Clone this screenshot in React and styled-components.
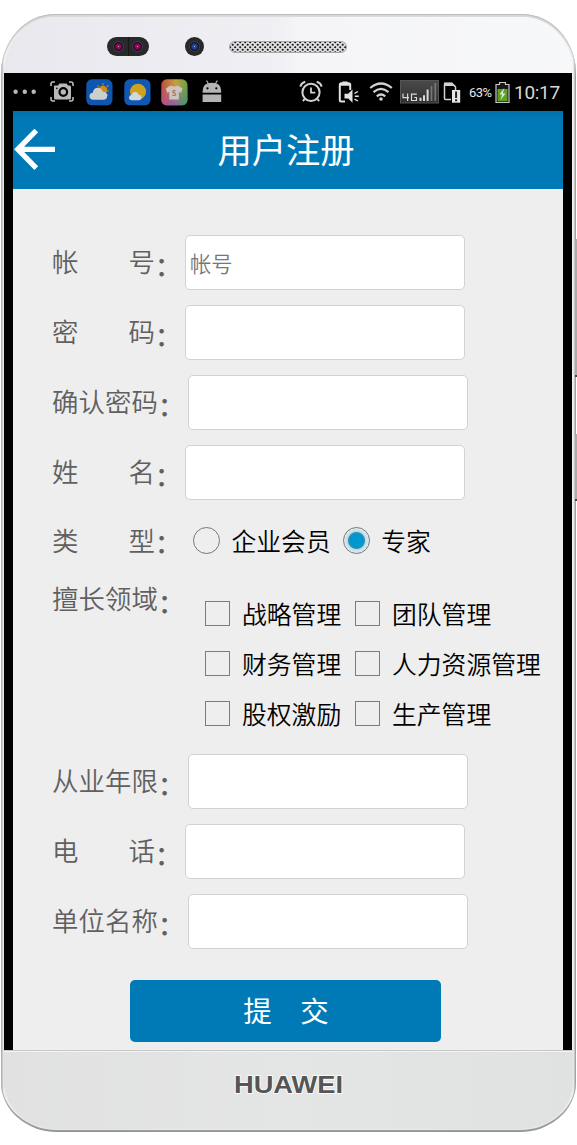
import React, { useState } from "react";
import styled, { createGlobalStyle } from "styled-components";

const DOMAINS = [
    ["战略管理", "团队管理"],
    ["财务管理", "人力资源管理"],
    ["股权激励", "生产管理"],
];

const StatusIcons = () => (
    <StatusBar>
        <Icon $gap={9} width="24" height="27">
            <g fill="#b9b9b9">
                <circle cx="2.6" cy="12.7" r="2.2" />
                <circle cx="11.8" cy="12.7" r="2.2" />
                <circle cx="20.7" cy="12.7" r="2.2" />
            </g>
        </Icon>
        <Icon $gap={13} width="24" height="27">
            <path d="M1 7V5q0-2 2-2h2M19 3h2q2 0 2 2v2M1 18v2q0 2 2 2h2M19 22h2q2 0 2-2v-2" fill="none" stroke="#b9b9b9" strokeWidth="1.6" />
            <path d="M4 7.500q0-1 1-1h3L9.500 4.500h7l1.500 2H19.500q1.500 0 1.500 1.500v11q0 1.500-1.500 1.500H5.500q-1.500 0-1.500-1.500z" fill="#b9b9b9" />
            <circle cx="13.300" cy="13" r="3.800" fill="#b9b9b9" stroke="#050505" strokeWidth="2.200" />
            <circle cx="6.800" cy="9.300" r="0.900" fill="#111" />
        </Icon>
        <Icon $gap={12} width="27" height="27">
            <rect x="0.300" y="0.300" width="26.200" height="26" rx="5.500" fill="#0f56b0" />
            <g stroke="#c18716" strokeWidth="1.100">
                <path d="M17 4v2.500M11.500 6.500l1.700 1.700M22.500 6.300l-1.700 1.700M22.800 12h-2M22 16.500l-1.500-1" />
            </g>
            <circle cx="17" cy="11" r="4.200" fill="#d08b18" />
            <path d="M7.500 20.700q-4-.2-4-3.500 0-3 3.300-3.400Q7.500 8.700 12 8.700q3.600 0 4.800 4 4.400.2 4.400 4 0 4-4 4z" fill="#ccd0cd" />
        </Icon>
        <Icon $gap={10.500} width="27" height="27">
            <rect x="0.300" y="0.300" width="26.200" height="26" rx="5.500" fill="#1058b3" />
            <circle cx="14" cy="12.700" r="8" fill="#cfa21d" />
            <path d="M8 21.300q-3-.2-3-2.600 0-2.300 2.500-2.600.8-3.200 3.700-3.200 2.900 0 3.500 2.900 2.800.2 2.800 2.800 0 2.700-2.900 2.700z" fill="#d3d8db" />
        </Icon>
        <Icon $gap={10.500} width="27" height="27">
            <defs>
                <linearGradient id="warm" x1="0" y1="0" x2="1" y2="0">
                    <stop offset="0" stopColor="#bd4e42" />
                    <stop offset="0.550" stopColor="#c4a03f" />
                    <stop offset="1" stopColor="#66a04d" />
                </linearGradient>
                <linearGradient id="cool" x1="0" y1="0" x2="1" y2="0">
                    <stop offset="0" stopColor="#c34e86" />
                    <stop offset="0.500" stopColor="#8660a8" />
                    <stop offset="1" stopColor="#3c9b6b" />
                </linearGradient>
                <linearGradient id="fade" x1="0" y1="0" x2="0" y2="1">
                    <stop offset="0.250" stopColor="#000" />
                    <stop offset="1" stopColor="#fff" />
                </linearGradient>
                <mask id="lower"><rect width="27" height="27" fill="url(#fade)" /></mask>
            </defs>
            <rect x="0.300" y="0.300" width="26.200" height="26" rx="5.500" fill="url(#warm)" />
            <rect x="0.300" y="0.300" width="26.200" height="26" rx="5.500" fill="url(#cool)" mask="url(#lower)" />
            <path d="M9.500 6.500q3.500 2.200 7.500 0l4.500 3-1.500 4.200-2.200-.8V20.500h-9.500v-7.600l-2.200.8L4.900 9.500z" fill="#cdc5c2" />
            <text x="13.200" y="16.500" fontSize="7.500" fontWeight="700" textAnchor="middle" fill="#b56b52">S</text>
        </Icon>
        <Icon $gap={13.500} width="20" height="27">
            <path d="M4.500 1.500l2 3.500M15.300 1.500l-2 3.500" stroke="#b4b4b4" strokeWidth="1.200" />
            <path d="M.6 13.800v-1.800q0-8.200 9.300-8.200t9.300 8.200v1.800z" fill="#b4b4b4" />
            <circle cx="5.500" cy="9.300" r="1.100" fill="#000" />
            <circle cx="14.300" cy="9.300" r="1.100" fill="#000" />
            <rect x="0.600" y="15.500" width="18.600" height="7.500" fill="#b4b4b4" />
        </Icon>
        <Icon $gap={77} width="24" height="27">
            <circle cx="12" cy="13.400" r="8.600" fill="none" stroke="#d2d2d2" strokeWidth="2" />
            <path d="M1.500 7.700q.4-3.700 4.800-5M22.500 7.700q-.4-3.700-4.800-5" fill="none" stroke="#d2d2d2" strokeWidth="2.200" />
            <path d="M12 8.500v5.200h4.300M5.800 20l-2 2M18.200 20l2 2" fill="none" stroke="#d2d2d2" strokeWidth="1.800" />
        </Icon>
        <Icon $gap={15.500} width="22" height="27">
            <path d="M7 22.500H3.300q-1.500 0-1.500-1.500V6q0-1.500 1.500-1.500h7.400q1.500 0 1.500 1.500v5" fill="none" stroke="#e2e2e2" strokeWidth="2" />
            <path d="M1 6.800V5.500q0-2 2-2h1.500V2.600h5v.9H11q2 0 2 2v1.300z" fill="#e2e2e2" />
            <path d="M6.500 14.800h3.700l4.300-4.300v13.300l-4.300-4.300H6.500z" fill="#e2e2e2" />
            <path d="M16.500 14.300l3.500-1.800M16.800 17.300h4M16.500 20.200l3.500 1.800" stroke="#e2e2e2" strokeWidth="1.400" />
        </Icon>
        <Icon $gap={8.500} width="24" height="27">
            <g fill="none" stroke="#d2d2d2" strokeWidth="2.200">
                <path d="M1.200 9q10.800-9 21.600 0" />
                <path d="M4.500 13.200q7.500-6.500 15 0" />
                <path d="M7.800 17.300q4.200-3.600 8.400 0" />
            </g>
            <circle cx="12" cy="20" r="1.800" fill="#d2d2d2" />
        </Icon>
        <Icon $gap={7} width="39" height="27">
            <defs>
                <linearGradient id="signal" x1="0" y1="0" x2="0" y2="1">
                    <stop offset="0" stopColor="#4a4a4a" />
                    <stop offset="1" stopColor="#303030" />
                </linearGradient>
            </defs>
            <rect x="0.500" y="1.500" width="38" height="22.500" fill="url(#signal)" stroke="#555" />
            <path d="M3 14.500v4.200h6M7.600 14.500v7.500M16.800 15.200h-5.300v6.300h5v-3h-2.300" fill="none" stroke="#d9d9d9" strokeWidth="1.200" />
            <path d="M20.500 22v-3.300M24 22v-5.800M27.600 22V10.500" stroke="#d9d9d9" strokeWidth="2" />
            <path d="M31.500 22V7M35.300 22V4" stroke="#777" strokeWidth="1.700" />
        </Icon>
        <Icon $gap={4.500} width="18" height="27">
            <path d="M8 20.500H2.500q-1 0-1-1v-14q0-1 1-1h6.200L12.500 8v3" fill="none" stroke="#d2d2d2" strokeWidth="1.500" />
            <path d="M1 3.500h8L12.800 7H1z" fill="#d2d2d2" />
            <rect x="9" y="11" width="8.200" height="12.700" fill="#e5e5e5" />
            <path d="M13.100 12.500v6.500M13.100 20.300v2" stroke="#222" strokeWidth="2" />
        </Icon>
        <Percent>63%</Percent>
        <Icon $gap={2} width="15" height="27">
            <path d="M1 5.500h3.500v-2h6v2H14v18H1z" fill="#171717" stroke="#c9c9c9" strokeWidth="1.200" />
            <rect x="2.500" y="10" width="10" height="12.300" fill="#59a51f" />
            <path d="M9.300 9L4.500 15.500h2.700L5.500 21l5-6.500H7.800z" fill="#e5e5e5" />
        </Icon>
        <Clock>10:17</Clock>
    </StatusBar>
);

const Field = ({ label, wide, placeholder, type = "text" }) => (
    <Row>
        <FieldLabel $wide={wide}>{label}</FieldLabel>
        <Colon>：</Colon>
        <Input type={type} placeholder={placeholder} />
    </Row>
);

const App = () => {
    const [kind, setKind] = useState("专家");
    const [picked, setPicked] = useState([]);

    const toggle = (name) => {
        setPicked((prev) => (prev.includes(name) ? prev.filter((n) => n !== name) : [...prev, name]));
    };

    return (
        <Stage>
            <GlobalStyle />
            <Phone>
                <Forehead>
                    <DualCamera>
                        <Lens $color="#a0006c" />
                        <Lens $color="#a0006c" />
                    </DualCamera>
                    <FrontCamera>
                        <Lens $color="#1b48ae" />
                    </FrontCamera>
                    <Speaker width="119" height="12">
                        <defs>
                            <pattern id="mesh" width="5" height="5" patternUnits="userSpaceOnUse">
                                <rect width="5" height="5" fill="#dedede" />
                                <circle cx="1.200" cy="1.200" r="1.050" fill="#171717" />
                                <circle cx="3.700" cy="3.700" r="1.050" fill="#171717" />
                            </pattern>
                        </defs>
                        <rect x="0.500" y="0.500" width="117" height="11" rx="5.500" fill="url(#mesh)" stroke="#a7a7a7" />
                    </Speaker>
                </Forehead>
                <Display>
                    <StatusIcons />
                    <Page>
                        <Header>
                            <Back aria-label="返回">
                                <svg width="42" height="42" viewBox="0 0 42 42">
                                    <path d="M23.300 1.500L4.800 20.300l18.500 18.800M5 20.300h37" fill="none" stroke="#fff" strokeWidth="5.300" />
                                </svg>
                            </Back>
                            <Title>用户注册</Title>
                        </Header>
                        <Form onSubmit={(e) => e.preventDefault()}>
                            <Field label="帐 号" placeholder="帐号" />
                            <Field label="密 码" type="password" />
                            <Field label="确认密码" type="password" wide />
                            <Field label="姓 名" />
                            <KindRow>
                                <Label>类 型</Label>
                                <Colon>：</Colon>
                                <Choices>
                                    {["企业会员", "专家"].map((name) => (
                                        <Choice key={name}>
                                            <Radio checked={kind === name} onChange={() => setKind(name)} />
                                            {name}
                                        </Choice>
                                    ))}
                                </Choices>
                            </KindRow>
                            <DomainRow>
                                <Label $wide>擅长领域</Label>
                                <Colon>：</Colon>
                                <DomainGrid>
                                    {DOMAINS.flat().map((name) => (
                                        <Choice key={name}>
                                            <Checkbox checked={picked.includes(name)} onChange={() => toggle(name)} />
                                            {name}
                                        </Choice>
                                    ))}
                                </DomainGrid>
                            </DomainRow>
                            <Field label="从业年限" wide />
                            <Field label="电 话" />
                            <Field label="单位名称" wide />
                            <Submit>提　交</Submit>
                        </Form>
                    </Page>
                </Display>
                <Chin>
                    <svg width="130" height="38">
                        <text x="10" y="27" textLength="109" lengthAdjust="spacingAndGlyphs" fontFamily="Liberation Sans, sans-serif" fontWeight="700" fontSize="24" fill="#555" stroke="#fff" strokeWidth="1.500" paintOrder="stroke">HUAWEI</text>
                    </svg>
                </Chin>
                <SideKey $top={225} $height={138} />
                <SideKey $top={420} $height={67} />
            </Phone>
        </Stage>
    );
};

export default App;

// Styled Components
const GlobalStyle = createGlobalStyle`
  body {
    margin: 0;
    background: #fff;
  }

  * {
    box-sizing: border-box;
  }

  body, input, button {
    font-family: "Noto Sans CJK SC", sans-serif;
    font-weight: 350;
  }
`;

const Stage = styled.div`
  width: 577px;
  height: 1145px;
  padding: 14px 1px 0;
  overflow: hidden;
`;

const Phone = styled.div`
  position: relative;
  display: flex;
  flex-direction: column;
  width: 575px;
  height: 1118px;
  padding: 0 3px;
  border-radius: 54px 54px 56px 56px / 60px 60px 50px 50px;
  background: linear-gradient(90deg, #a5a9ac 0, #b9bcbe 1px, #f2f2f2 3px, #f2f2f2 572px, #ddd 573px, #85827e 575px);
  box-shadow: inset 0 1px 1px #b9bcb9, inset 0 3px 1px #d8dad8, inset 0 -2px 1px #919599;
`;

const Forehead = styled.div`
  display: flex;
  align-items: center;
  flex: 0 0 56px;
  margin-top: 3px;
  padding: 2px 0 0 103px;
  border-radius: 51px 51px 0 0 / 56px 56px 0 0;
  background: linear-gradient(90deg, #e9e8ee, #efeff4 48%, #f5f5f8 52%, #f7f8fa);
`;

const DualCamera = styled.div`
  display: flex;
  align-items: center;
  justify-content: space-around;
  width: 42px;
  height: 19px;
  padding: 0 2px;
  border-radius: 10px;
  background: linear-gradient(90deg, #29292b 50%, #111 50%, #29292b 54%);
`;

const FrontCamera = styled.div`
  display: flex;
  align-items: center;
  justify-content: center;
  width: 19px;
  height: 19px;
  margin-left: 36px;
  border-radius: 50%;
  background: #27282c;
`;

const Lens = styled.span`
  width: 11px;
  height: 11px;
  border: 1px solid #464047;
  border-radius: 50%;
  background: radial-gradient(circle at 50% 50%, #bbb 0, ${(p) => p.$color} 1px, ${(p) => p.$color} 2px, #17121a 4px);
`;

const Speaker = styled.svg`
  margin: 1px 0 0 25px;
`;

const Display = styled.div`
  flex: 0 0 977px;
  padding: 0 9px;
  background: #000;
  width: 568px;
`;

const StatusBar = styled.div`
  display: flex;
  align-items: center;
  height: 38px;
  margin: 0 -9px;
  white-space: nowrap;
`;

const Icon = styled.svg`
  flex: none;
  margin-left: ${(p) => p.$gap}px;
`;

const Percent = styled.span`
  width: 24px;
  margin-left: 8px;
  color: #e8e8e8;
  font: 400 13px Roboto, sans-serif;
  letter-spacing: -0.6px;
`;

const Clock = styled.span`
  margin-left: 4px;
  color: #d8d8d8;
  font: 400 19px Roboto, sans-serif;
  letter-spacing: -0.3px;
`;

const Page = styled.main`
  height: 939px;
  background: #eee;
`;

const Header = styled.header`
  display: grid;
  grid-template-columns: 42px 1fr 42px;
  align-items: center;
  height: 78px;
  background: linear-gradient(#0070a9, #007ab6 8px);
`;

const Back = styled.button`
  width: 42px;
  height: 42px;
  padding: 0;
  border: 0;
  background: none;
  cursor: pointer;

  svg {
    display: block;
  }
`;

const Title = styled.h1`
  margin: 0;
  padding: 0 4px 4px 0;
  color: #fff;
  font-size: 34.3px;
  font-weight: 400;
  line-height: 50px;
  text-align: center;
`;

const Form = styled.form`
  display: flex;
  flex-direction: column;
  gap: 15px;
  padding: 46px 0 0 39px;
`;

const Row = styled.div`
  display: flex;
  align-items: center;
  height: 55px;
`;

const Label = styled.span`
  width: ${(p) => (p.$wide ? 106 : 103)}px;
  color: #606060;
  font-size: 26.4px;
  font-weight: 350;
  line-height: 40px;
  text-align-last: justify;
  white-space: nowrap;
`;

const FieldLabel = styled(Label)`
  padding-bottom: 4px;
`;

const Colon = styled.span`
  width: 30px;
  padding-top: 4px;
  color: #606060;
  font-size: 26.4px;
  font-weight: 500;
  line-height: 40px;
`;

const Input = styled.input`
  width: 280px;
  height: 55px;
  padding: 0 4px;
  border: 1px solid #d2d2d2;
  border-radius: 5px;
  background: #fff;
  font-size: 21.3px;

  &::placeholder {
    color: #777;
  }
`;

const KindRow = styled(Row)`
  height: 50px;
`;

const Choices = styled.div`
  display: flex;
  gap: 12px;
  margin-left: 8px;
`;

const Choice = styled.label`
  display: flex;
  align-items: center;
  gap: 12px;
  color: #000;
  font-size: 24.8px;
  font-weight: 350;
  line-height: 36px;
  white-space: nowrap;
  cursor: pointer;
`;

const Radio = styled.input.attrs({ type: "radio", name: "kind" })`
  appearance: none;
  flex: none;
  width: 27px;
  height: 27px;
  margin: 0 -0.5px 0 0;
  border: 1px solid #777;
  border-radius: 50%;

  &:checked {
    background: radial-gradient(circle, #0099cf 7px, #4b8ca6 8px, #b8dce9 9px, #dcebf0 12px);
  }
`;

const Checkbox = styled.input.attrs({ type: "checkbox" })`
  appearance: none;
  flex: none;
  width: 25px;
  height: 25px;
  margin: 0;
  border: 1px solid #7c7c7c;

  &:checked {
    background: #0099cf;
  }
`;

const DomainRow = styled.div`
  display: flex;
  height: 161px;
  margin-top: -2px;
`;

const DomainGrid = styled.div`
  display: grid;
  grid-template-columns: 150px auto;
  grid-auto-rows: 50px;
  margin: 10px 0 0 17px;
`;

const Submit = styled.button.attrs({ type: "submit" })`
  width: 311px;
  height: 62px;
  margin: 16px 0 0 78px;
  padding: 0 0 3px 1px;
  border: 0;
  border-radius: 5px;
  background: #007ab6;
  color: #fff;
  font-size: 28.5px;
  font-weight: 400;
  cursor: pointer;
`;

const Chin = styled.footer`
  display: flex;
  justify-content: center;
  flex: 0 0 79px;
  padding: 15px 0 0;
  border-top: 1px solid #c6c8c7;
  border-radius: 0 0 53px 53px / 0 0 46px 46px;
  background: linear-gradient(90deg, #e0e1e0, #e4e5e5 50%, #e0e1e1);
  box-shadow: inset 0 1px #f4f4f4;
`;

const SideKey = styled.span`
  position: absolute;
  top: ${(p) => p.$top}px;
  right: -1px;
  width: 2px;
  height: ${(p) => p.$height}px;
  border-bottom: 2px solid #444;
  background: #a9adac;
`;
